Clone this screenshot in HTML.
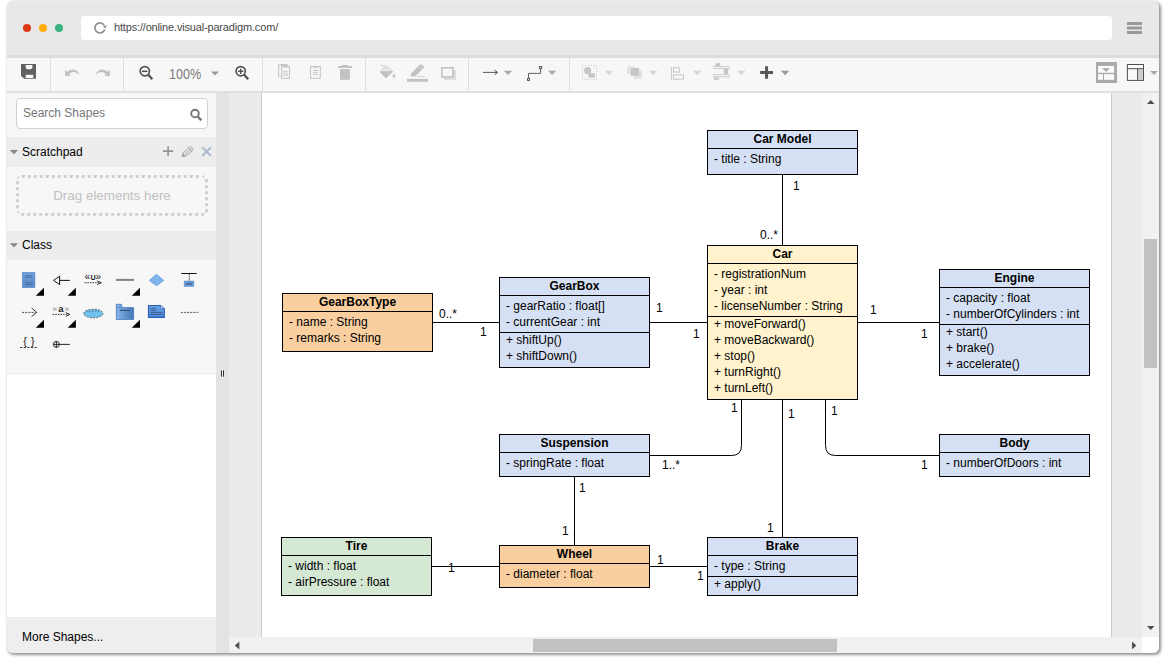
<!DOCTYPE html>
<html><head><meta charset="utf-8"><title>Visual Paradigm Online</title>
<style>
html,body{margin:0;padding:0}
body{width:1170px;height:665px;position:relative;overflow:hidden;background:#fff;font-family:"Liberation Sans", Arial, sans-serif;font-size:12px;color:#000}
.abs{position:absolute}
#win{position:absolute;left:7px;top:1px;width:1152px;height:652px;border-radius:6px;background:#f7f7f7;box-shadow:1.5px 1.5px 3px rgba(0,0,0,.42),0 0 1px rgba(90,90,130,.18);overflow:hidden}
.bx{position:absolute;width:151px;border:1px solid #000;box-sizing:border-box;margin:0}
.ti{position:absolute;left:-1px;top:0px;width:151px;text-align:center;font-weight:bold;line-height:16px;height:16px;white-space:nowrap}
.dv{position:absolute;left:-1px;width:151px;height:1px;background:#000;margin-top:-1px}
.ln{position:absolute;left:6px;line-height:16px;height:16px;white-space:nowrap;margin-top:0px}
.lb{position:absolute;line-height:16px;height:16px;white-space:nowrap;margin-top:0px}

#tbar{position:absolute;left:7px;top:1px;width:1152px;height:54px;background:#e8e8e8;border-radius:6px 6px 0 0}
#tline{position:absolute;left:7px;top:55px;width:1152px;height:3px;background:#dcdcdc}
#tool{position:absolute;left:7px;top:58px;width:1152px;height:33px;background:#f7f7f7}
#tool2{position:absolute;left:7px;top:91px;width:1152px;height:2px;background:#e0e0e0}
.dot{position:absolute;width:8.4px;height:8.4px;border-radius:50%;top:23.6px}
#url{position:absolute;left:81px;top:16px;width:1031px;height:24px;background:#fff;border-radius:3px}
#urlt{position:absolute;left:114px;top:15px;line-height:24px;font-size:11px;color:#484848;white-space:nowrap;letter-spacing:-0.17px}
#side{position:absolute;left:7px;top:93px;width:209px;height:524px;background:#fff}
#sidetop{position:absolute;left:7px;top:93px;width:209px;height:280px;background:#f7f7f7;border-bottom:1px solid #ececec}
.sh{position:absolute;left:7px;width:209px;background:#ededed;height:30px}
.sht{position:absolute;left:22px;line-height:16px;font-size:12px;white-space:nowrap}
#search{position:absolute;left:16px;top:98px;width:192px;height:31px;box-sizing:border-box;border:1px solid #d0d0d0;border-radius:4px;background:#fff}
#searcht{position:absolute;left:23px;top:105px;line-height:16px;font-size:12px;color:#777;white-space:nowrap}
#drag{position:absolute;left:16px;top:175px;width:192px;height:40px;box-sizing:border-box;border:2px dotted #cfcfcf;border-radius:5px}
#dragt{position:absolute;left:16px;top:188px;width:192px;text-align:center;line-height:16px;font-size:13.4px;color:#c0c0c0;white-space:nowrap}
#more{position:absolute;left:7px;top:617px;width:209px;height:36px;background:#eeeeee;border-radius:0 0 0 6px}
#moret{position:absolute;left:22px;top:629px;line-height:16px;font-size:12px;color:#000;white-space:nowrap}
#split{position:absolute;left:216px;top:93px;width:13px;height:560px;background:#e3e3e3}
#cbg{position:absolute;left:229px;top:93px;width:913px;height:544px;background:#ebebeb}
#page{position:absolute;left:261px;top:93px;width:851px;height:544px;background:#fff;border-left:1px solid #cacaca;border-right:1px solid #cacaca;box-sizing:border-box}
#vs{position:absolute;left:1142px;top:93px;width:17px;height:544px;background:#f1f1f1}
#hs{position:absolute;left:229px;top:637px;width:913px;height:16px;background:#f1f1f1}
#corner{position:absolute;left:1142px;top:637px;width:17px;height:16px;background:#fff;border-radius:0 0 6px 0}
#vth{position:absolute;left:1144px;top:239px;width:13px;height:128.5px;background:#c1c1c1}
#hth{position:absolute;left:533px;top:639px;width:304px;height:13px;background:#c1c1c1}
#zt{position:absolute;left:168.5px;top:66px;line-height:16px;font-size:14px;color:#7a7a7a;white-space:nowrap;transform:scaleX(.9);transform-origin:0 0}

</style></head>
<body>
<div id="win"></div>

<div id="tbar"></div><div id="tline"></div><div id="tool"></div><div id="tool2"></div>
<div class="dot" style="left:23px;background:#e0391a"></div>
<div class="dot" style="left:39px;background:#ffab00"></div>
<div class="dot" style="left:55px;background:#36b37e"></div>
<div id="url"></div>
<div id="urlt">https://online.visual-paradigm.com/</div>
<div id="side"></div><div id="sidetop"></div>
<div id="search"></div><div id="searcht">Search Shapes</div>
<div class="sh" style="top:137px"></div><div class="sht" style="top:144px">Scratchpad</div>
<div id="dragt">Drag elements here</div>
<div class="sh" style="top:231px;height:29px"></div><div class="sht" style="top:237px">Class</div>
<div id="more"></div><div id="moret">More Shapes...</div>
<div id="split"></div>
<div id="cbg"></div><div id="page"></div>
<div id="vs"></div><div id="hs"></div><div id="corner"></div>
<div id="vth"></div><div id="hth"></div>
<div id="zt">100%</div>
<svg class="abs" style="left:0;top:0" width="1170" height="665" viewBox="0 0 1170 665">
<!-- reload icon -->
<g fill="none" stroke="#8e8e8e" stroke-width="1.7"><path d="M104.73 29.3A5 5 0 1 1 104.2 25.4"/></g>
<path d="M105.6 28.3L106.9 24.9L102.6 26.7Z" fill="#8e8e8e"/>
<!-- hamburger -->
<g fill="#999"><rect x="1127" y="22" width="15" height="3"/><rect x="1127" y="26.5" width="15" height="3"/><rect x="1127" y="31" width="15" height="3"/></g>
<!-- toolbar separators -->
<g fill="#dedede"><rect x="50" y="58" width="1" height="33"/><rect x="123" y="58" width="1" height="33"/><rect x="262" y="58" width="1" height="33"/><rect x="365" y="58" width="1" height="33"/><rect x="468" y="58" width="1" height="33"/><rect x="569" y="58" width="1" height="33"/></g>
<!-- save -->
<path d="M21 64H36V78.8H24.4L21 76Z" fill="#606060"/>
<path d="M25.7 65H32.4V67.2Q32.4 69.2 30.4 69.2H27.7Q25.7 69.2 25.7 67.2Z" fill="#f7f7f7"/>
<rect x="25.7" y="74.8" width="7.6" height="3.2" fill="#f7f7f7"/>
<!-- undo / redo -->
<path d="M65 69.8V75.9H70.8L69.3 74.3Q73.2 69.4 79.9 74.9Q75 66 67 71.7Z" fill="#c2c2c2"/>
<path d="M110 69.8V75.9H104.2L105.7 74.3Q101.8 69.4 95.1 74.9Q100 66 108 71.7Z" fill="#c2c2c2"/>
<!-- zoom out -->
<g fill="none" stroke="#505050" stroke-width="1.7"><circle cx="144.8" cy="71.2" r="4.6"/><path d="M148.3 74.7L152.3 79.2" stroke-width="2.3"/><path d="M142 71.3H147.4" stroke-width="1.5"/></g>
<!-- zoom in -->
<g fill="none" stroke="#505050" stroke-width="1.7"><circle cx="240.7" cy="71.2" r="4.6"/><path d="M244.2 74.7L248.2 79.2" stroke-width="2.3"/><path d="M238.1 71.3H243.3M240.7 68.7V73.9" stroke-width="1.4"/></g>
<!-- zoom dropdown -->
<path d="M211 71.5H219L215 75.5Z" fill="#999"/>
<!-- copy -->
<g fill="none" stroke="#c2c2c2" stroke-width="1"><path d="M281.2 76.1H278.6V64.7H287.3V66"/><rect x="281.7" y="66.4" width="7.8" height="11.9" fill="#f7f7f7"/><path d="M283.2 71.3H287.8M283.2 73.3H287.8M283.2 75.4H287.8" stroke-width="0.9"/><path d="M280.8 65.2H287.3M283.6 66.9H287.7" stroke-width="1.3"/></g>
<!-- paste -->
<g fill="none" stroke="#c2c2c2" stroke-width="1"><rect x="310.5" y="66.6" width="9.8" height="11.7"/><path d="M313 70.4H318M313 72.4H318M313 74.4H318" stroke-width="0.9"/><path d="M313.3 67H318" stroke-width="1.4"/></g>
<!-- trash -->
<g fill="#c2c2c2"><rect x="338.1" y="66" width="13.9" height="1.9"/><rect x="342.2" y="65" width="5.8" height="1.2"/><rect x="340" y="69.1" width="9.9" height="10.7"/></g>
<!-- fill bucket -->
<path d="M386.2 65.6L392.6 71.7L385.9 77.9L380 71.7Z" fill="#ececec" stroke="#c2c2c2" stroke-width="0.8"/>
<path d="M380.6 71.2L392.2 70.9L392.8 71.7L385.9 78.1L379.8 71.7Z" fill="#c2c2c2"/>
<path d="M381.1 64.2L387.1 69.6" stroke="#c2c2c2" stroke-width="0.9" fill="none"/>
<path d="M394 73.2Q396.4 76.2 395.4 77.2Q394 78.3 392.6 77.2Q391.6 76.2 394 73.2Z" fill="#cacaca"/>
<!-- line colour pencil -->
<g fill="#c2c2c2"><rect x="407" y="78.9" width="21" height="2.9"/><path d="M411 76.4V73.4L420 64.6Q421 63.8 422.2 64.8L423.6 66.2Q424.4 67.2 423.6 68L415 76.4Z"/><rect x="417" y="76" width="7.7" height="0.7"/></g>
<path d="M419.6 66.2L422.2 68.6" stroke="#e0e0e0" stroke-width="0.6" fill="none"/>
<!-- shadow -->
<rect x="444.2" y="70.1" width="11.7" height="9.7" fill="#dadada"/>
<rect x="441.9" y="67.8" width="11.1" height="9.2" fill="#f7f7f7" stroke="#c2c2c2" stroke-width="1.6"/>
<!-- arrow -->
<path d="M483 72.4H497" stroke="#484848" stroke-width="0.9" fill="none"/><path d="M494.6 70.1L497.5 72.4L494.6 74.7" stroke="#484848" stroke-width="1" fill="none"/>
<path d="M503.9 70.8H512.2L508.05 74.9Z" fill="#a8a8a8"/>
<!-- waypoint -->
<g fill="none" stroke="#505050" stroke-width="0.9"><path d="M528.5 78.3V73.4H540.6V68.9"/><rect x="527.5" y="78.4" width="2.1" height="2.1"/><rect x="539.6" y="66.5" width="2.1" height="2.1"/></g>
<path d="M547.9 70.8H556.2L552.05 74.9Z" fill="#a8a8a8"/>
<!-- group -->
<rect x="582.5" y="65.5" width="14" height="14" fill="none" stroke="#c0c0c0" stroke-width="1" stroke-dasharray="1 1.8"/>
<circle cx="587.6" cy="70.6" r="3.6" fill="#c6c6c6"/><rect x="588.3" y="73.2" width="6.7" height="4.5" fill="#c6c6c6"/>
<path d="M604.7 70.8H613.2L608.95 75.2Z" fill="#d6d6d6"/>
<!-- to front -->
<rect x="627.1" y="66.2" width="7.9" height="7.7" fill="#e2e2e2"/><rect x="634" y="70.8" width="8" height="8" fill="#e2e2e2"/><rect x="630.9" y="68" width="8.2" height="8" fill="#c6c6c6"/>
<path d="M648.8 70.8H657.3L653.05 75.2Z" fill="#d6d6d6"/>
<!-- align -->
<g fill="none" stroke="#c6c6c6" stroke-width="1"><path d="M671.4 67V79.8"/><rect x="673.5" y="67.7" width="5.8" height="4.3"/><rect x="673.5" y="74.9" width="10" height="4.3"/></g>
<path d="M693 70.8H701.5L697.25 75.2Z" fill="#d6d6d6"/>
<!-- distribute -->
<g fill="#cbcbcb"><rect x="712.9" y="66" width="17.2" height="1"/><rect x="712.9" y="68" width="17.2" height="1"/><rect x="712.9" y="74.2" width="17.2" height="1"/><rect x="712.9" y="76.3" width="17.2" height="1"/></g>
<g fill="#c6c6c6"><rect x="715.5" y="63.1" width="4.6" height="2.9"/><rect x="723.8" y="69" width="4.3" height="5.2"/><rect x="714" y="77.3" width="4.8" height="2.5"/></g>
<path d="M737 70.8H745.5L741.25 75.2Z" fill="#d6d6d6"/>
<!-- plus -->
<path d="M760.1 72.45H773M766.55 66.2V78.8" stroke="#585858" stroke-width="3" fill="none"/>
<path d="M780.9 70.8H789.3L785.1 75.2Z" fill="#999"/>
<!-- format panel -->
<rect x="1096" y="62" width="21" height="21" fill="#a9a9a9"/>
<rect x="1098" y="65.9" width="16.1" height="6.9" fill="#fafafa"/><rect x="1098" y="74.1" width="5" height="5.7" fill="#fafafa"/><rect x="1104" y="74.1" width="10.1" height="5.7" fill="#fafafa"/>
<path d="M1102 68.2H1110L1106 71.8Z" fill="#a9a9a9"/>
<!-- outline -->
<rect x="1127.4" y="64.5" width="16.1" height="15.9" fill="#fafafa" stroke="#505050" stroke-width="1"/>
<rect x="1138" y="69" width="5" height="11" fill="#d0d0d0"/>
<path d="M1127.4 68.7H1143.5M1137.6 68.7V80.4" stroke="#505050" stroke-width="1" fill="none"/>
<path d="M1150 70.9H1158L1154 74.9Z" fill="#aaa"/>
<!-- search icon -->
<g fill="none" stroke="#777" stroke-width="1.9"><circle cx="195" cy="113.5" r="3.8"/><path d="M197.8 116.5L201.3 120.3" stroke-width="2.5"/></g>
<!-- section triangles -->
<path d="M9.8 150.1H18.1L13.95 154.2Z" fill="#868686"/><path d="M9.8 243.2H18.1L13.95 247.3Z" fill="#868686"/>
<!-- scratchpad icons -->
<path d="M163 151.1H173.2M168.1 146.2V156" stroke="#939393" stroke-width="1.6" fill="none"/>
<g fill="none" stroke="#999" stroke-width="0.9"><path d="M182.2 156.4L183 153.2L189.6 146.9Q190.4 146.3 191.2 147L192.9 148.7Q193.5 149.5 192.8 150.3L186 156L182.2 156.4Z"/><path d="M184.6 154.8L191.6 148.2"/><path d="M188.6 147.8L191.8 151"/></g>
<path d="M182 156.6L182.8 153.6L185.4 156Z" fill="#999"/>
<path d="M202.3 147.4L210.9 155.9M210.9 147.4L202.3 155.9" stroke="#a9b8d0" stroke-width="2" fill="none"/>
<!-- drag dotted box -->
<g fill="none" stroke="#cecece" stroke-width="2.9" stroke-dasharray="3 3">
<path d="M21.8 176.5H201"/><path d="M21.2 214.4H205"/><path d="M17.5 181.3V210"/><path d="M206.5 179.2V213"/></g>
<g fill="#d6d6d6"><circle cx="18.2" cy="177.4" r="1.2"/><circle cx="18.2" cy="212.2" r="1.2"/><circle cx="203.4" cy="176.6" r="1.3"/></g>
<!-- scroll arrows -->
<path d="M1147 104H1154.5L1150.75 100Z" fill="#505050"/>
<path d="M1147 626H1154.5L1150.75 630Z" fill="#505050"/>
<path d="M239.3 641.5V649.5L234.8 645.5Z" fill="#505050"/>
<path d="M1132 641.5V649.3L1136.4 645.4Z" fill="#505050"/>
<!-- splitter handle -->
<rect x="219.8" y="369.4" width="5" height="8" rx="1" fill="#f6f6f6"/>
<path d="M221.4 370.2V376.8M223.5 370.2V376.8" stroke="#333" stroke-width="1.1" fill="none"/>
<!-- palette icons -->
<defs>
<linearGradient id="gc" x1="0" y1="0" x2="0" y2="1"><stop offset="0" stop-color="#6f9fdc"/><stop offset="1" stop-color="#5a8ccb"/></linearGradient>
<linearGradient id="gp" x1="0" y1="0" x2="1" y2="0"><stop offset="0" stop-color="#84b6e8"/><stop offset="1" stop-color="#4676b8"/></linearGradient>
<linearGradient id="gn" x1="0" y1="0" x2="0" y2="1"><stop offset="0" stop-color="#6aa5ea"/><stop offset="1" stop-color="#4f8fe2"/></linearGradient>
</defs>
<!-- class -->
<rect x="22.3" y="272.3" width="12.6" height="15.3" fill="url(#gc)" stroke="#5585c6" stroke-width="0.6"/>
<path d="M22.3 281H34.9" stroke="#5080c0" stroke-width="0.5" fill="none"/>
<path d="M25 275.8H32.6M25 277.4H32.6M25 282.8H32.6M25 284.6H32.6" stroke="#4f6f9c" stroke-width="0.9" fill="none"/>
<!-- corner triangles -->
<g fill="#000">
<path d="M44 287.8V295.7H35.8Z"/><path d="M75.9 287.8V295.7H67.7Z"/><path d="M140 287.8V295.7H131.8Z"/>
<path d="M44 319.8V327.7H35.8Z"/><path d="M75.9 319.8V327.7H67.7Z"/><path d="M140 319.8V327.7H131.8Z"/>
</g>
<!-- generalization -->
<g fill="none" stroke="#111" stroke-width="1"><path d="M59.6 276.2V284.6L53.6 280.4Z" fill="#f7f7f7"/><path d="M59.6 280.4H69.8"/></g>
<!-- usage -->
<text y="279.8" font-family="Liberation Sans, Arial, sans-serif" fill="#222"><tspan x="84.4" y="280.4" font-size="10">«</tspan><tspan x="90.6" y="279.8" font-size="7.2" font-weight="bold">U</tspan><tspan x="95.6" y="280.4" font-size="10">»</tspan></text>
<path d="M84.7 282.7H101" stroke="#222" stroke-width="0.9" stroke-dasharray="1.6 1" fill="none"/>
<path d="M97 280.8L101.4 282.7L97 284.6" stroke="#222" stroke-width="0.9" fill="none"/>
<!-- association -->
<rect x="116" y="278.9" width="18" height="2" fill="#828282"/>
<!-- diamond -->
<path d="M149.2 280.4L156.5 274.3L163.8 280.4L156.5 285.8Z" fill="#7fb5eb" stroke="#5c98da" stroke-width="0.7"/>
<!-- association class -->
<path d="M181.2 273.5H196.6" stroke="#111" stroke-width="1" fill="none"/>
<path d="M189.3 274V281" stroke="#111" stroke-width="0.9" stroke-dasharray="1.2 1" fill="none"/>
<rect x="184.1" y="281" width="9.8" height="5.5" fill="#6a9bd8" stroke="#5d8fd0" stroke-width="0.5"/>
<rect x="186.2" y="283.2" width="5.7" height="1.4" fill="#4a5e80"/>
<!-- dependency -->
<path d="M22 312.4H35.8" stroke="#333" stroke-width="0.9" stroke-dasharray="2 1.2" fill="none"/>
<path d="M31.6 308L36.7 312.4L31.6 316.6" stroke="#333" stroke-width="1" fill="none"/>
<!-- abstraction -->
<text font-family="Liberation Sans, Arial, sans-serif" fill="#222"><tspan x="52.4" y="312" font-size="8.5" fill="#888">«</tspan><tspan x="58.3" y="311.8" font-size="9.5" font-weight="bold">a</tspan><tspan x="64.2" y="312" font-size="8.5" fill="#888">»</tspan></text>
<path d="M52.6 314.4H69" stroke="#222" stroke-width="0.9" stroke-dasharray="1.6 1" fill="none"/>
<path d="M65.7 312.5L69.8 314.4L65.7 316.5" stroke="#222" stroke-width="0.9" fill="none"/>
<!-- collaboration ellipse -->
<ellipse cx="93.4" cy="313.5" rx="9.6" ry="4.3" fill="#6fc1ee" stroke="#333" stroke-width="0.8" stroke-dasharray="1.8 1.4"/>
<path d="M87 311.2H100" stroke="#4a7aa0" stroke-width="0.9" stroke-dasharray="1 0.6" fill="none"/>
<!-- package -->
<path d="M116.3 304.3H121.7V307.6H133.6V319.5H116.3Z" fill="url(#gp)" stroke="#3f70b6" stroke-width="0.7"/>
<path d="M116.3 307.6H121.7" stroke="#3f70b6" stroke-width="0.5" fill="none"/>
<rect x="120" y="309.9" width="10" height="1.1" fill="#2c4c7c"/>
<!-- note -->
<path d="M148.5 305.5H160.3L164.3 308.8V317.4H148.5Z" fill="url(#gn)" stroke="#2c5cb2" stroke-width="1.2" stroke-linejoin="round"/>
<path d="M160.3 305.5V308.8H164.3" fill="#cfe0f7" stroke="#2c5cb2" stroke-width="0.7"/>
<path d="M150.4 308.2H156.3M150.4 310.3H156.3M150.4 312.4H162.6M150.4 314.5H162.6" stroke="#3e5c8a" stroke-width="1" fill="none"/>
<!-- dashed line -->
<path d="M181 312.4H198.2" stroke="#555" stroke-width="1" stroke-dasharray="2 1.1" fill="none"/>
<!-- constraint -->
<text x="29.2" y="344.6" font-family="Liberation Sans, Arial, sans-serif" font-size="10.5" text-anchor="middle" fill="#111" letter-spacing="0.6">{ }</text>
<path d="M20.1 347.5H38.1" stroke="#222" stroke-width="0.9" stroke-dasharray="2.2 1.4" fill="none"/>
<!-- containment -->
<g fill="none" stroke="#111" stroke-width="0.9"><circle cx="56.4" cy="344.4" r="3"/><path d="M53.4 344.4H69.8M56.4 341.4V347.4"/></g>

</svg>

<div id="diagram">

<svg class="abs" style="left:0;top:0" width="1170" height="665" viewBox="0 0 1170 665" fill="none" stroke="#000" stroke-width="1" shape-rendering="crispEdges">
<path d="M782.5 175V245"/>
<path d="M433 322.5H499"/>
<path d="M650 322.5H707"/>
<path d="M858 322.5H939"/>
<path d="M782.5 400V537"/>
<path d="M574.5 477V545"/>
<path d="M432 566.5H499"/>
<path d="M650 566.5H707"/>
<g shape-rendering="auto">
<path d="M741.5 400V445.5Q741.5 455.5 731.5 455.5H650"/>
<path d="M825.5 400V445.5Q825.5 455.5 835.5 455.5H939"/>
</g>
</svg>

<div class="bx" style="left:707px;top:130px;height:45px;background:#d6e0f4">
<div class="ti">Car Model</div>
<div class="dv" style="top:18px"></div>
<div class="ln" style="top:20px">- title : String</div>
</div>
<div class="bx" style="left:707px;top:245px;height:155px;background:#fff2cc">
<div class="ti">Car</div>
<div class="dv" style="top:18px"></div>
<div class="ln" style="top:20px">- registrationNum</div>
<div class="ln" style="top:36px">- year : int</div>
<div class="ln" style="top:52px">- licenseNumber : String</div>
<div class="dv" style="top:71px"></div>
<div class="ln" style="top:69.5px">+ moveForward()</div>
<div class="ln" style="top:85.5px">+ moveBackward()</div>
<div class="ln" style="top:101.5px">+ stop()</div>
<div class="ln" style="top:117.5px">+ turnRight()</div>
<div class="ln" style="top:133.5px">+ turnLeft()</div>
</div>
<div class="bx" style="left:282px;top:293px;height:59px;background:#f9cfa0">
<div class="ti">GearBoxType</div>
<div class="dv" style="top:18px"></div>
<div class="ln" style="top:20px">- name : String</div>
<div class="ln" style="top:36px">- remarks : String</div>
</div>
<div class="bx" style="left:499px;top:277px;height:91px;background:#d6e0f4">
<div class="ti">GearBox</div>
<div class="dv" style="top:18px"></div>
<div class="ln" style="top:20px">- gearRatio : float[]</div>
<div class="ln" style="top:36px">- currentGear : int</div>
<div class="dv" style="top:55px"></div>
<div class="ln" style="top:53.5px">+ shiftUp()</div>
<div class="ln" style="top:69.5px">+ shiftDown()</div>
</div>
<div class="bx" style="left:939px;top:269px;height:107px;background:#d6e0f4">
<div class="ti">Engine</div>
<div class="dv" style="top:18px"></div>
<div class="ln" style="top:20px">- capacity : float</div>
<div class="ln" style="top:36px">- numberOfCylinders : int</div>
<div class="dv" style="top:55px"></div>
<div class="ln" style="top:53.5px">+ start()</div>
<div class="ln" style="top:69.5px">+ brake()</div>
<div class="ln" style="top:85.5px">+ accelerate()</div>
</div>
<div class="bx" style="left:499px;top:434px;height:43px;background:#d6e0f4">
<div class="ti">Suspension</div>
<div class="dv" style="top:18px"></div>
<div class="ln" style="top:20px">- springRate : float</div>
</div>
<div class="bx" style="left:939px;top:434px;height:43px;background:#d6e0f4">
<div class="ti">Body</div>
<div class="dv" style="top:18px"></div>
<div class="ln" style="top:20px">- numberOfDoors : int</div>
</div>
<div class="bx" style="left:281px;top:537px;height:59px;background:#d5e8d4">
<div class="ti">Tire</div>
<div class="dv" style="top:18px"></div>
<div class="ln" style="top:20px">- width : float</div>
<div class="ln" style="top:36px">- airPressure : float</div>
</div>
<div class="bx" style="left:499px;top:545px;height:43px;background:#f9cfa0">
<div class="ti">Wheel</div>
<div class="dv" style="top:18px"></div>
<div class="ln" style="top:20px">- diameter : float</div>
</div>
<div class="bx" style="left:707px;top:537px;height:59px;background:#d6e0f4">
<div class="ti">Brake</div>
<div class="dv" style="top:18px"></div>
<div class="ln" style="top:20px">- type : String</div>
<div class="dv" style="top:39px"></div>
<div class="ln" style="top:37.5px">+ apply()</div>
</div>
<div class="lb" style="left:793px;top:178px">1</div>
<div class="lb" style="left:760.0px;top:227px">0..*</div>
<div class="lb" style="left:439.0px;top:306px">0..*</div>
<div class="lb" style="left:480px;top:324px">1</div>
<div class="lb" style="left:656px;top:300px">1</div>
<div class="lb" style="left:693px;top:326px">1</div>
<div class="lb" style="left:870px;top:302px">1</div>
<div class="lb" style="left:921px;top:326px">1</div>
<div class="lb" style="left:731px;top:400px">1</div>
<div class="lb" style="left:788px;top:406px">1</div>
<div class="lb" style="left:831px;top:403px">1</div>
<div class="lb" style="left:662px;top:457px">1..*</div>
<div class="lb" style="left:921px;top:457px">1</div>
<div class="lb" style="left:579px;top:480px">1</div>
<div class="lb" style="left:562px;top:523px">1</div>
<div class="lb" style="left:448px;top:560px">1</div>
<div class="lb" style="left:657px;top:552px">1</div>
<div class="lb" style="left:697px;top:568px">1</div>
<div class="lb" style="left:767px;top:520px">1</div>
</div>
</body></html>
